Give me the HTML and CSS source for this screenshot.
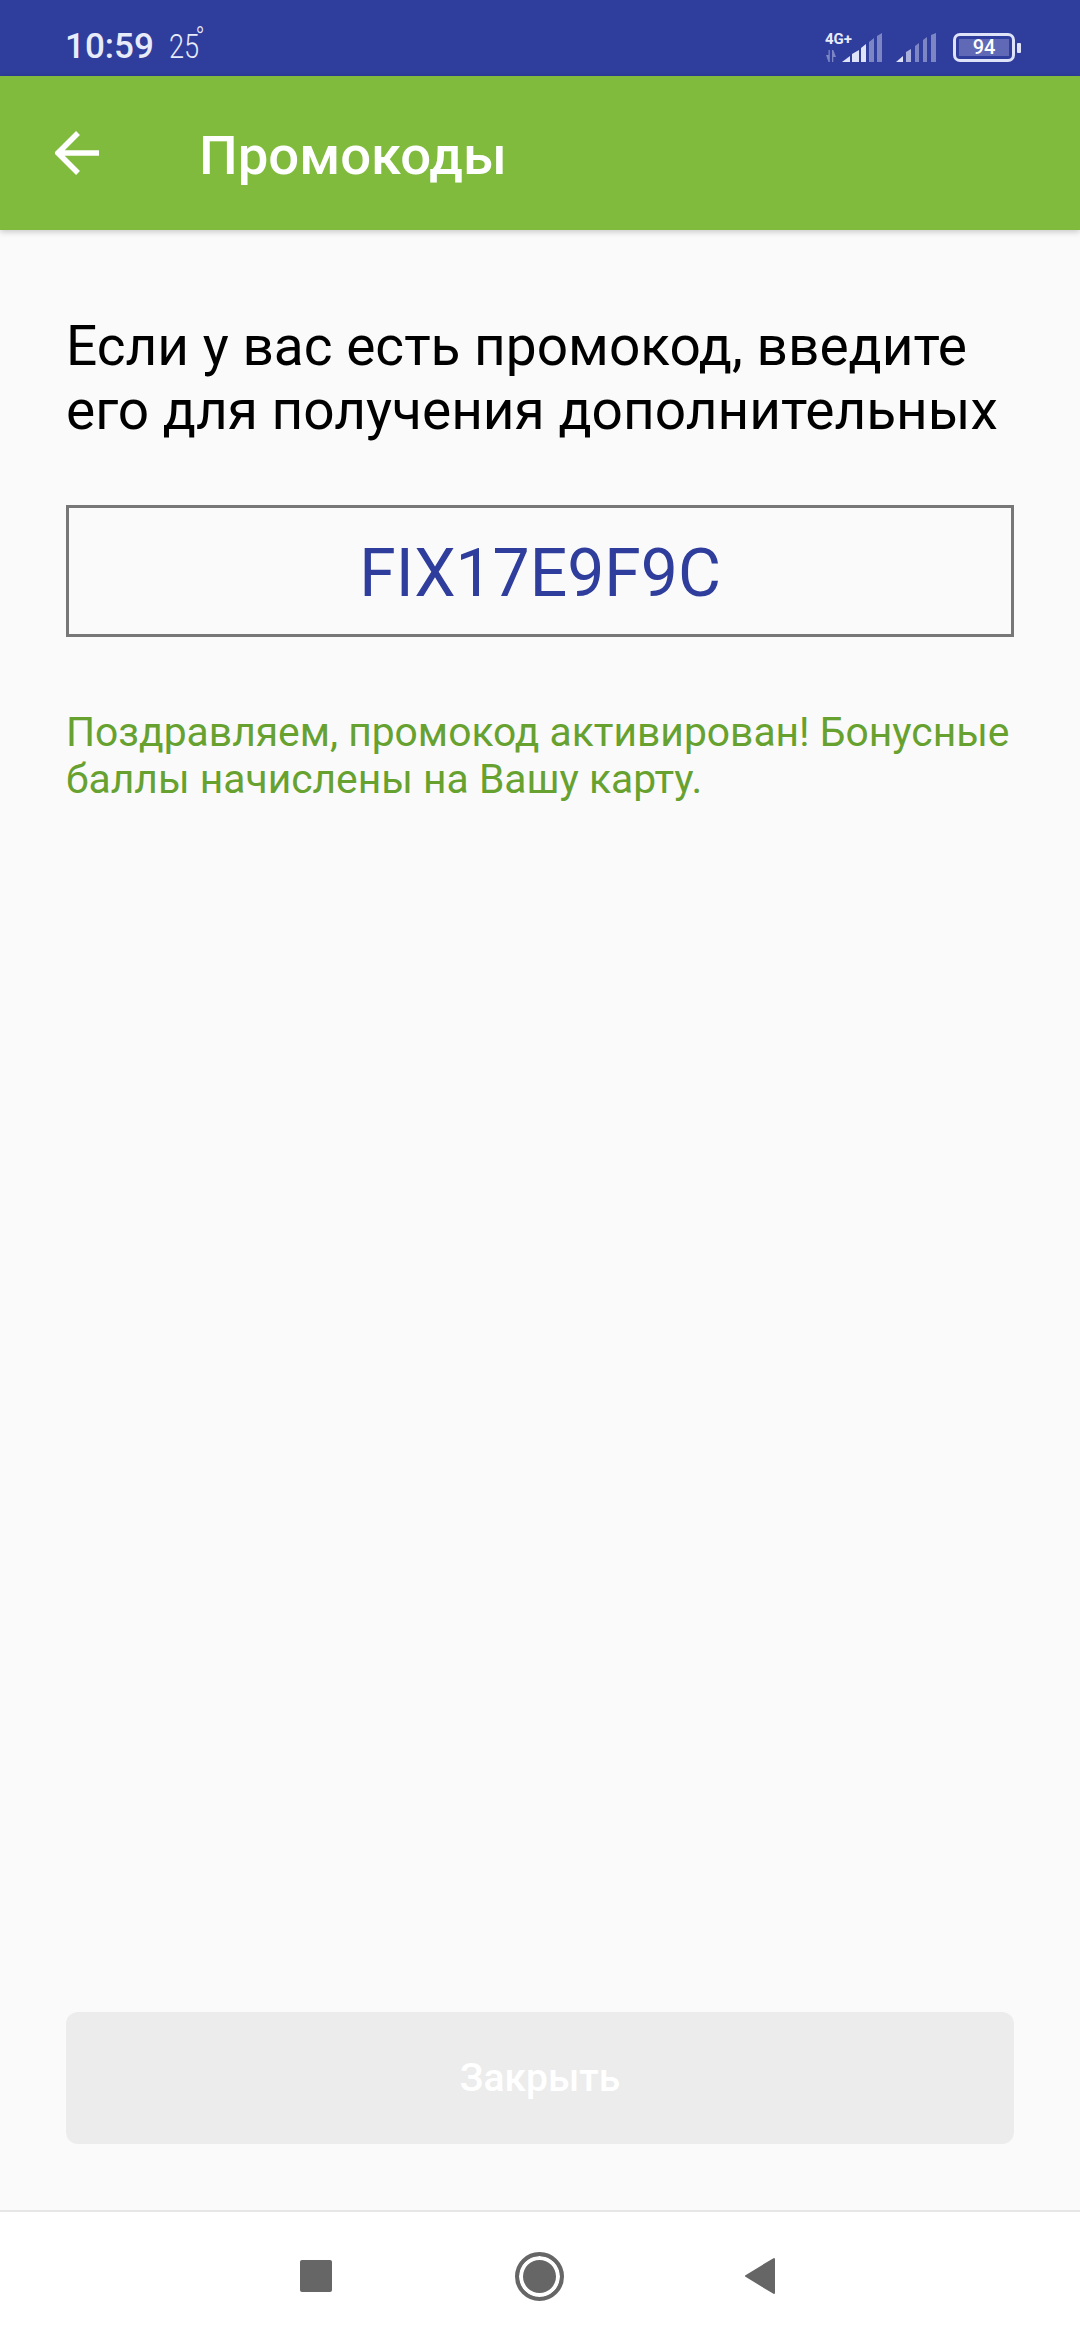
FILE: index.html
```html
<!DOCTYPE html>
<html lang="ru">
  <head>
    <meta charset="UTF-8" />
    <meta name="viewport" content="width=device-width, initial-scale=1.0" />
    <title>Промокоды</title>
    <link rel="stylesheet" href="styles.css">
  </head>
  <body>
    <div id="status-bar">
      <div class="status-left">
        <span class="clock">10:59</span>
        <span class="temp">25<span class="deg">°</span></span>
      </div>
      <div class="status-right">
        <div class="sim">
          <span class="net-type">4G+</span>
          <svg class="arrows" width="12" height="12" viewBox="0 0 12 12">
            <path d="M1 5 L3.5 5 L3.5 0 L4.8 0 L4.8 12 L3.5 12 Z M7 0 L8.3 0 L11 7 L8.3 7 L8.3 12 L7 12 Z" fill="#7d86c4" />
          </svg>
          <svg class="signal" width="40" height="29" viewBox="0 0 40 29">
            <polygon points="0,29 8,23 8,29" fill="#dfe3f7" />
            <polygon points="10,29 10,21 17,17 17,29" fill="#dfe3f7" />
            <polygon points="19,29 19,15 24,11 24,29" fill="#dfe3f7" />
            <polygon points="27,29 27,9 32,5 32,29" fill="#7d86c4" />
            <polygon points="35,29 35,3 40,0 40,29" fill="#7d86c4" />
          </svg>
        </div>
        <svg class="signal sim2" width="40" height="29" viewBox="0 0 40 29">
          <polygon points="0,29 7,23 7,29" fill="#dfe3f7" />
          <polygon points="10,29 10,19 15,16 15,29" fill="#aab0de" />
          <polygon points="19,29 19,13 23,10 23,29" fill="#7d86c4" />
          <polygon points="27,29 27,7 31,4 31,29" fill="#7d86c4" />
          <polygon points="35,29 35,2 40,0 40,29" fill="#7d86c4" />
        </svg>
        <div class="battery">
          <div class="battery-body">
            <span class="battery-level">94</span>
          </div>
          <div class="battery-nub"></div>
        </div>
      </div>
    </div>

    <header id="app-bar">
      <svg class="back" width="44" height="44" viewBox="0 0 44 44">
        <path d="M44 22 H3 M23 2 L3 22 L23 42" fill="none" stroke="#fff" stroke-width="5.5" />
      </svg>
      <h1>Промокоды</h1>
    </header>

    <main id="content">
      <p class="intro">Если у вас есть промокод, введите его для получения дополнительных</p>
      <div class="code-field">FIX17E9F9C</div>
      <p class="success">Поздравляем, промокод активирован! Бонусные баллы начислены на Вашу карту.</p>
      <button class="close-btn" type="button" disabled>Закрыть</button>
    </main>

    <nav id="nav-bar">
      <div class="nav-square"></div>
      <div class="nav-circle"></div>
      <svg class="nav-back" width="32" height="38" viewBox="0 0 32 38">
        <path d="M30 2 V36 L2 19 Z" fill="#666" stroke="#666" stroke-width="2" stroke-linejoin="round" />
      </svg>
    </nav>
  </body>
</html>
```

FILE: styles.css
```css
:root {
  --blue: #2f3d9c;
  --green: #80bb3d;
  --page: #fafafa;
  --nav-icon: #666;
}

* {
  box-sizing: border-box;
}

html {
  font-family: "Roboto", sans-serif;
}

body {
  margin: 0;
  width: 1080px;
  height: 2340px;
  overflow: hidden;
  background: var(--page);
  display: flex;
  flex-direction: column;
}

/* status bar */
#status-bar {
  height: 76px;
  flex: none;
  background: var(--blue);
  color: #e8ebfa;
  display: flex;
  justify-content: space-between;
  align-items: center;
  padding: 0 59px 0 65px;
}

.status-left {
  display: flex;
  align-items: baseline;
  gap: 15px;
  padding-top: 17px;
}

.clock {
  font-size: 35px;
  font-weight: 500;
}

.temp {
  font-size: 34px;
  font-weight: 300;
  display: inline-block;
  transform: scaleX(0.8);
  transform-origin: left;
  position: relative;
}

.deg {
  position: absolute;
  top: -7px;
  left: 33px;
  font-size: 30px;
}

.status-right {
  display: flex;
  align-items: flex-end;
  padding-top: 19px;
}

.sim {
  position: relative;
  width: 57px;
  height: 29px;
  display: flex;
  align-items: flex-end;
  justify-content: space-between;
}

.net-type {
  position: absolute;
  left: 0;
  top: -1px;
  font-size: 15px;
  font-weight: 700;
  line-height: 14px;
  color: #e8ebfa;
}

.sim2 {
  margin-left: 14px;
}

.battery {
  display: flex;
  align-items: center;
  margin-left: 17px;
}

.battery-body {
  width: 62px;
  height: 29px;
  border: 3px solid #dfe3f7;
  border-radius: 7px;
  padding: 3px;
  display: flex;
}

.battery-level {
  flex: 1;
  background: #5f69b5;
  color: #fff;
  font-size: 20px;
  font-weight: 500;
  line-height: 17px;
  text-align: center;
}

.battery-nub {
  width: 4px;
  height: 10px;
  margin-left: 2px;
  background: #dfe3f7;
  border-radius: 1px;
}

/* app bar */
#app-bar {
  height: 154px;
  flex: none;
  background: var(--green);
  display: flex;
  align-items: center;
  padding-left: 55px;
  box-shadow: 0 2px 6px rgba(0, 0, 0, 0.2);
  position: relative;
}

#app-bar .back {
  margin-top: -1px;
}

#app-bar h1 {
  margin: 4px 0 0 100px;
  font-size: 54.5px;
  font-weight: 500;
  color: #fff;
}

/* content */
#content {
  flex: 1;
  padding: 0 66px 66px;
  display: flex;
  flex-direction: column;
}

.intro {
  margin: 84px 0 0;
  font-size: 55px;
  line-height: 64px;
  color: #000;
}

.code-field {
  margin-top: 63px;
  height: 132px;
  padding-top: 4px;
  border: 3px solid #777;
  color: var(--blue);
  font-size: 66px;
  display: flex;
  align-items: center;
  justify-content: center;
}

.success {
  margin: 72px 0 0;
  font-size: 40.8px;
  line-height: 47px;
  color: #67a12f;
}

.close-btn {
  margin-top: auto;
  height: 132px;
  border: 0;
  border-radius: 12px;
  background: #ececec;
  color: #fff;
  font-family: inherit;
  font-size: 39px;
  font-weight: 500;
}

/* bottom nav */
#nav-bar {
  height: 130px;
  flex: none;
  background: #fff;
  border-top: 2px solid #e6e6e6;
  display: flex;
  align-items: center;
  padding: 0 0 0 300px;
}

.nav-square {
  width: 32px;
  height: 32px;
  border-radius: 2px;
  background: var(--nav-icon);
}

.nav-circle {
  width: 49px;
  height: 49px;
  margin-left: 183px;
  border: 4px solid var(--nav-icon);
  border-radius: 50%;
  background: var(--nav-icon);
  box-shadow: inset 0 0 0 4px #fff;
}

.nav-back {
  margin-left: 180px;
}
```
